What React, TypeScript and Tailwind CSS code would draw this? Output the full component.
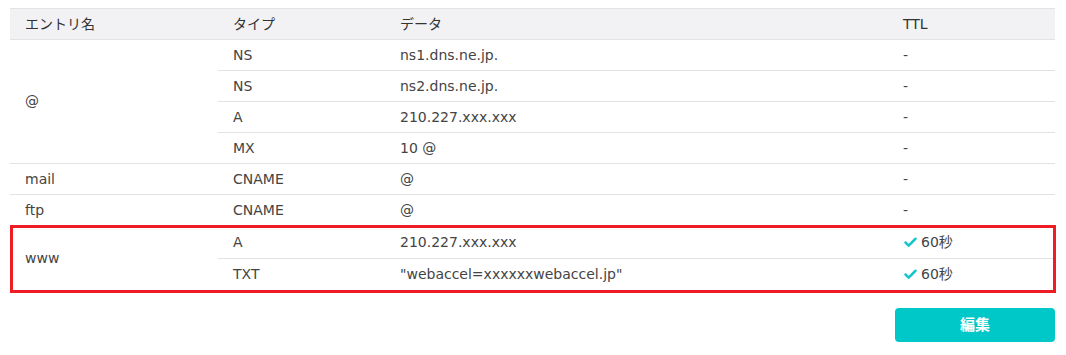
import { Check } from 'lucide-react'

type Rec = { type: string; data: string; ttl?: string }

const groups: { name: string; records: Rec[]; highlight?: boolean }[] = [
  {
    name: '@',
    records: [
      { type: 'NS', data: 'ns1.dns.ne.jp.' },
      { type: 'NS', data: 'ns2.dns.ne.jp.' },
      { type: 'A', data: '210.227.xxx.xxx' },
      { type: 'MX', data: '10 @' },
    ],
  },
  { name: 'mail', records: [{ type: 'CNAME', data: '@' }] },
  { name: 'ftp', records: [{ type: 'CNAME', data: '@' }] },
  {
    name: 'www',
    highlight: true,
    records: [
      { type: 'A', data: '210.227.xxx.xxx', ttl: '60秒' },
      { type: 'TXT', data: '"webaccel=xxxxxxwebaccel.jp"', ttl: '60秒' },
    ],
  },
]

export default function App() {
  return (
    <div
      className="w-[1066px] h-[355px] bg-white pt-2 px-[10px] text-[14px] text-[#444]"
      style={{ fontFamily: '"DejaVu Sans", "Noto Sans CJK JP", sans-serif' }}
    >
      <div className="relative w-[1045px]">
        <table className="w-[1045px] table-fixed border-collapse">
          <colgroup>
            <col className="w-[208px]" />
            <col className="w-[167px]" />
            <col className="w-[503px]" />
            <col className="w-[167px]" />
          </colgroup>
          <thead>
            <tr className="bg-[#f2f2f4] border-t border-b border-[#e2e2e2] text-[#333]">
              <th className="h-[31px] px-[15px] text-left font-normal">エントリ名</th>
              <th className="px-[15px] text-left font-normal">タイプ</th>
              <th className="px-[15px] text-left font-normal">データ</th>
              <th className="px-[15px] text-left font-normal">TTL</th>
            </tr>
          </thead>
          {groups.map((g) => (
            <tbody key={g.name}>
              {g.records.map((r, i) => (
                <tr key={i} className="border-b border-[#e2e2e2]">
                  {i === 0 && (
                    <td rowSpan={g.records.length} className="px-[15px] align-middle">
                      {g.name}
                    </td>
                  )}
                  <td className={g.highlight ? (i === 0 ? 'h-[33px] px-[15px]' : 'h-[32px] px-[15px]') : 'h-[31px] px-[15px]'}>
                    {r.type}
                  </td>
                  <td className="px-[15px]">{r.data}</td>
                  <td className="px-[15px]">
                    {r.ttl ? (
                      <span className="flex items-center gap-[3px]">
                        <Check className="w-[15px] h-[15px] text-[#17c5c8]" strokeWidth={4} />
                        {r.ttl}
                      </span>
                    ) : (
                      '-'
                    )}
                  </td>
                </tr>
              ))}
            </tbody>
          ))}
        </table>
        {/* highlight frame over the www rows */}
        <div className="absolute left-0 top-[217px] w-[1046px] h-[68px] border-[3px] border-[#ee1c25] pointer-events-none" />
      </div>
      <div className="flex justify-end mt-[17px] w-[1045px]">
        <button className="w-[160px] h-[34px] rounded-[4px] bg-[#00c8c8] text-white text-[15px] font-semibold">
          編集
        </button>
      </div>
    </div>
  )
}
